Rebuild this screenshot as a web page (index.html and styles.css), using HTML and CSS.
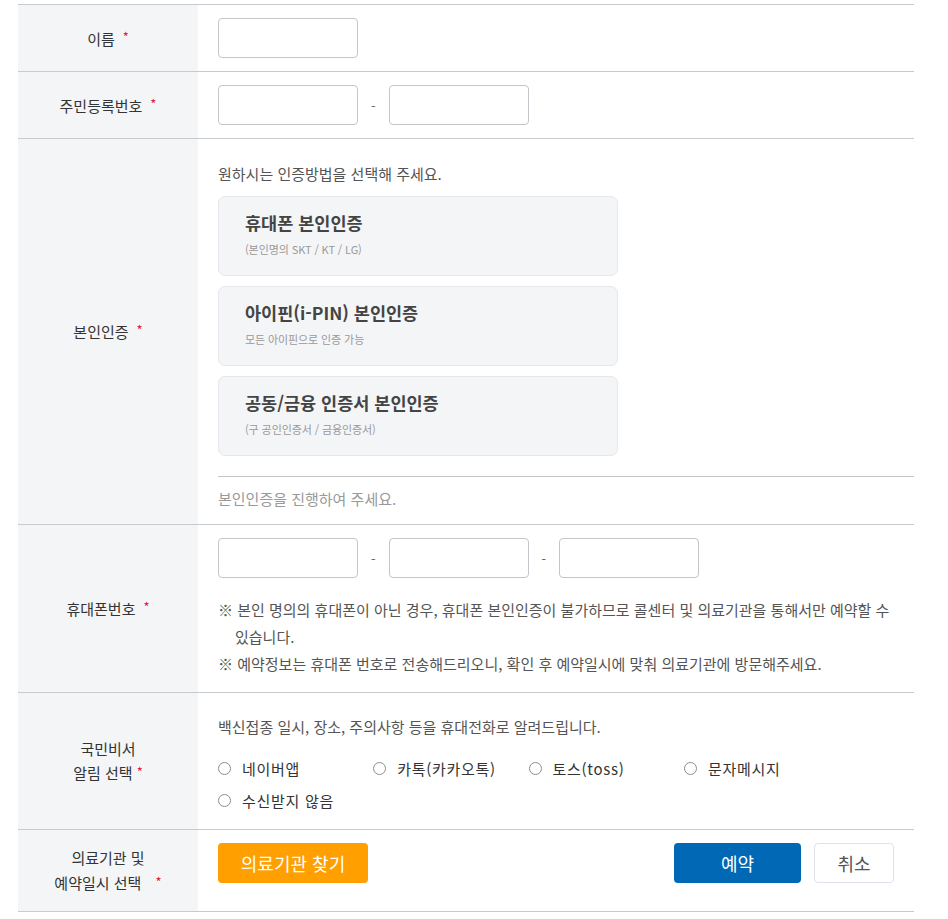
FILE: index.html
```html
<!DOCTYPE html>
<html lang="ko">
<head>
<meta charset="utf-8">
<link rel="stylesheet" href="styles.css">
</head>
<body>
<div class="form">
  <div class="row">
    <div class="label">이름 <span class="req">*</span></div>
    <div class="cell">
      <input class="inp" type="text">
    </div>
  </div>
  <div class="row">
    <div class="label">주민등록번호 <span class="req">*</span></div>
    <div class="cell inline">
      <input class="inp" type="text"><span class="dash">-</span><input class="inp" type="text">
    </div>
  </div>
  <div class="row">
    <div class="label">본인인증 <span class="req">*</span></div>
    <div class="cell auth">
      <p class="guide">원하시는 인증방법을 선택해 주세요.</p>
      <div class="cards">
        <div class="card"><div class="card-title">휴대폰 본인인증</div><div class="card-sub">(본인명의 SKT / KT / LG)</div></div>
        <div class="card"><div class="card-title">아이핀(i-PIN) 본인인증</div><div class="card-sub">모든 아이핀으로 인증 가능</div></div>
        <div class="card"><div class="card-title">공동/금융 인증서 본인인증</div><div class="card-sub">(구 공인인증서 / 금융인증서)</div></div>
      </div>
      <div class="divider"></div>
      <p class="status">본인인증을 진행하여 주세요.</p>
    </div>
  </div>
  <div class="row">
    <div class="label">휴대폰번호 <span class="req">*</span></div>
    <div class="cell phone">
      <div class="inline">
        <input class="inp" type="text"><span class="dash">-</span><input class="inp" type="text"><span class="dash">-</span><input class="inp" type="text">
      </div>
      <ul class="notes">
        <li>※ 본인 명의의 휴대폰이 아닌 경우, 휴대폰 본인인증이 불가하므로 콜센터 및 의료기관을 통해서만 예약할 수 있습니다.</li>
        <li>※ 예약정보는 휴대폰 번호로 전송해드리오니, 확인 후 예약일시에 맞춰 의료기관에 방문해주세요.</li>
      </ul>
    </div>
  </div>
  <div class="row">
    <div class="label lines24"><div>국민비서<br>알림 선택 <span class="req tight">*</span></div></div>
    <div class="cell notify">
      <p class="guide2">백신접종 일시, 장소, 주의사항 등을 휴대전화로 알려드립니다.</p>
      <div class="radios">
        <label class="radio"><span class="dot"></span>네이버앱</label>
        <label class="radio"><span class="dot"></span>카톡(카카오톡)</label>
        <label class="radio"><span class="dot"></span>토스(toss)</label>
        <label class="radio"><span class="dot"></span>문자메시지</label>
        <label class="radio"><span class="dot"></span>수신받지 않음</label>
      </div>
    </div>
  </div>
  <div class="row">
    <div class="label lines25"><div>의료기관 및<br>예약일시 선택 <span class="req wide">*</span></div></div>
    <div class="cell actions">
      <button class="btn find" type="button">의료기관 찾기</button>
      <div class="right">
        <button class="btn ok" type="button">예약</button>
        <button class="btn cancel" type="button">취소</button>
      </div>
    </div>
  </div>
</div>
</body>
</html>
```
FILE: styles.css
```css
* { box-sizing: border-box; }
body {
  margin: 0;
  background: #fff;
  font-family: "Noto Sans CJK KR", "Noto Sans", sans-serif;
  color: #333;
  font-size: 15px;
}
.form {
  width: 896px;
  margin: 4px 0 0 18px;
  border-top: 1px solid #c9cacf;
}
.row {
  display: grid;
  grid-template-columns: 180px 1fr;
  border-bottom: 1px solid #c9cacf;
}
.label {
  background: #f4f5f7;
  display: flex;
  align-items: center;
  justify-content: center;
  text-align: center;
  font-size: 15px;
  color: #333;
}
.lines24 { line-height: 24px; }
.lines25 { line-height: 25px; padding: 15px 0; }
.req {
  color: #e8173a;
  font-size: 13px;
  margin-left: 8px;
  position: relative;
  top: -2px;
}
.req.tight { margin-left: 0; }
.req.wide { margin-left: 10px; }
.cell {
  padding: 13px 20px;
}
.inline {
  display: flex;
  align-items: center;
}
.inp {
  width: 140px;
  height: 40px;
  border: 1px solid #c4c5cb;
  border-radius: 4px;
  background: #fff;
  margin: 0;
  padding: 0 10px;
  font: inherit;
}
.dash {
  width: 30.5px;
  text-align: center;
  color: #666;
  font-size: 13px;
}
.auth { padding: 23px 0 13px 20px; }
.guide {
  margin: 0;
  line-height: 24px;
  color: #555;
}
.cards {
  margin-top: 10px;
  display: flex;
  flex-direction: column;
  gap: 10px;
}
.card {
  width: 400px;
  height: 80px;
  background: #f4f5f7;
  border: 1px solid #e6e8ec;
  border-radius: 7px;
  padding: 13px 26px 0;
}
.card-title {
  font-size: 17.5px;
  font-weight: 700;
  color: #444;
  line-height: 26px;
}
.card-sub {
  font-size: 11px;
  color: #999;
  line-height: 18px;
  letter-spacing: -0.1px;
  margin-top: 4px;
}
.divider {
  height: 1px;
  background: #c4c5cb;
  margin-top: 20px;
}
.status {
  margin: 10px 0 0;
  line-height: 24px;
  color: #999;
}
.phone { padding-bottom: 15px; }
.notes {
  list-style: none;
  margin: 18px 0 0;
  padding: 0 0 0 17px;
}
.notes li {
  text-indent: -17px;
  line-height: 27px;
  color: #555;
}
.notify { padding: 22px 20px 13px; }
.guide2 {
  margin: 0;
  line-height: 24px;
  color: #555;
}
.radios {
  margin-top: 13px;
  display: grid;
  grid-template-columns: repeat(4, 155.3px);
  grid-auto-rows: 32px;
}
.radio {
  display: flex;
  align-items: center;
  color: #333;
  letter-spacing: 0.7px;
}
.dot {
  width: 13px;
  height: 13px;
  border: 1px solid #8d8d8d;
  border-radius: 50%;
  margin-right: 11px;
  flex: none;
}
.actions {
  display: flex;
  align-items: flex-start;
  justify-content: space-between;
}
.right { display: flex; gap: 13px; }
.btn {
  height: 40px;
  border-radius: 4px;
  font: inherit;
  font-size: 18px;
  cursor: pointer;
  margin: 0;
  padding: 0;
}
.find {
  width: 150px;
  background: #ff9f00;
  border: 0;
  color: #fff;
}
.ok {
  width: 127px;
  background: #0068b5;
  border: 0;
  color: #fff;
}
.cancel {
  width: 80px;
  background: #fff;
  border: 1px solid #dfe2ea;
  color: #555;
}
```
